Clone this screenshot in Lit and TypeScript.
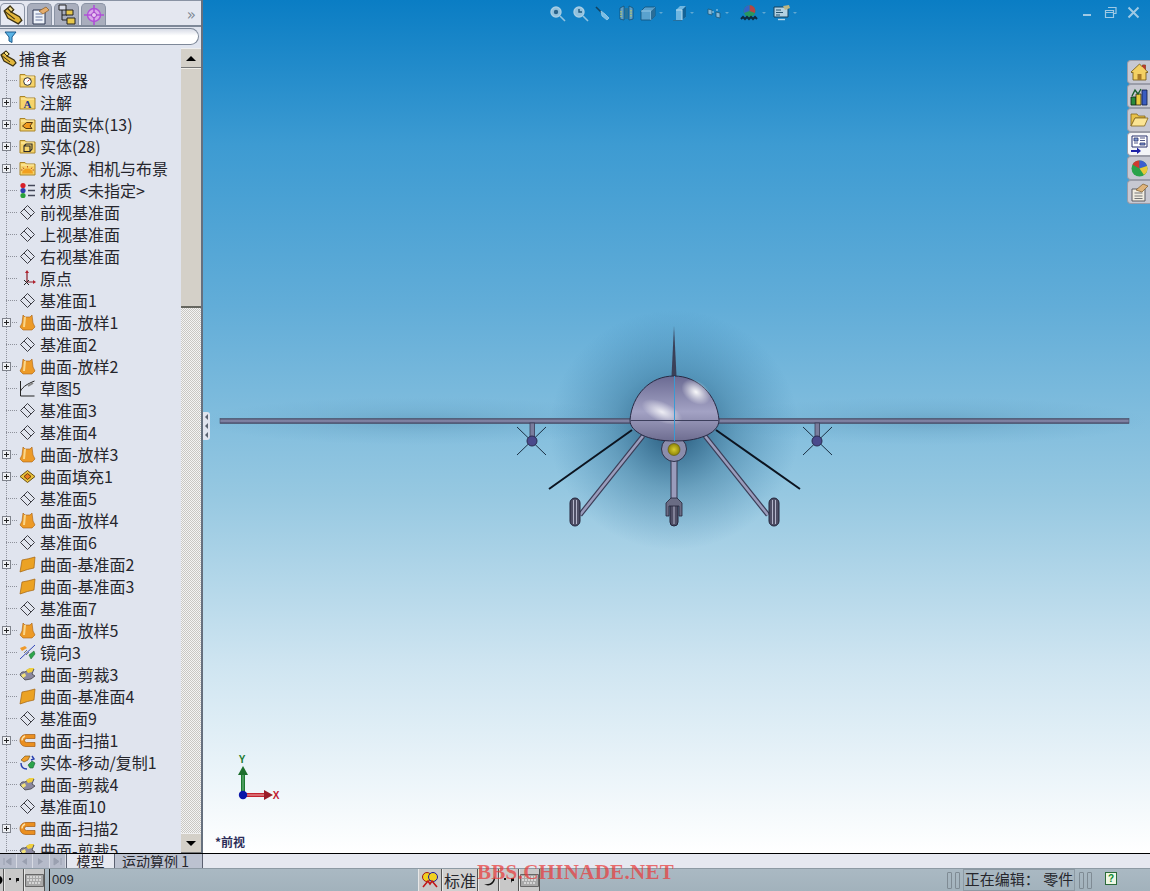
import { LitElement, html, css, svg } from 'lit';
import { customElement } from 'lit/decorators.js';

type Row = [string, string, boolean?];

const rows: Row[] = [
  ['传感器', 'fsensor'],
  ['注解', 'fnote', true],
  ['曲面实体(13)', 'fsurf', true],
  ['实体(28)', 'fsolid', true],
  ['光源、相机与布景', 'flight', true],
  ['材质  <未指定>', 'material'],
  ['前视基准面', 'plane'],
  ['上视基准面', 'plane'],
  ['右视基准面', 'plane'],
  ['原点', 'origin'],
  ['基准面1', 'plane'],
  ['曲面-放样1', 'loft', true],
  ['基准面2', 'plane'],
  ['曲面-放样2', 'loft', true],
  ['草图5', 'sketch'],
  ['基准面3', 'plane'],
  ['基准面4', 'plane'],
  ['曲面-放样3', 'loft', true],
  ['曲面填充1', 'fill', true],
  ['基准面5', 'plane'],
  ['曲面-放样4', 'loft', true],
  ['基准面6', 'plane'],
  ['曲面-基准面2', 'surfplane', true],
  ['曲面-基准面3', 'surfplane'],
  ['基准面7', 'plane'],
  ['曲面-放样5', 'loft', true],
  ['镜向3', 'mirror'],
  ['曲面-剪裁3', 'trim'],
  ['曲面-基准面4', 'surfplane'],
  ['基准面9', 'plane'],
  ['曲面-扫描1', 'sweep', true],
  ['实体-移动/复制1', 'move'],
  ['曲面-剪裁4', 'trim'],
  ['基准面10', 'plane'],
  ['曲面-扫描2', 'sweep', true],
  ['曲面-剪裁5', 'trim'],
];

const folder = (inner: unknown) => html`<svg width="17" height="16" viewBox="0 0 17 16">
  <path d="M1 2.500h5l1.500 1.500h8.500v11h-15z" fill="#f6d36a" stroke="#a9842a"/>
  <path d="M2 5h13" stroke="#fff0b0"/>
  ${inner}
</svg>`;

const part = html`<svg width="17" height="17" viewBox="0 0 17 17">
  <path d="M1 5l5-4 3 3-2 2 7 4 2 3-3 3-9-5z" fill="#e2b63c" stroke="#3c3212" stroke-width="1.2"/>
  <path d="M6 1l3 3-2 2-3-3zM1 5l9 7" fill="#f5e08a" stroke="#3c3212"/>
</svg>`;

const icons: Record<string, unknown> = {
  fsensor: folder(svg`<circle cx="8.500" cy="9.500" r="3.800" fill="#fff" stroke="#333"/><path d="M8.500 9.500l2-2" stroke="#c33"/>`),
  fnote: folder(svg`<text x="4.500" y="13.500" font-size="11" font-weight="700" font-family="Liberation Serif" fill="#24348c">A</text>`),
  fsurf: folder(svg`<path d="M3.500 10l4-3.500h6l-2.500 3.500 2 2.500H7z" fill="#f09a20" stroke="#5a3a10"/>`),
  fsolid: folder(svg`<path d="M5 8h6v5.500H5zM5 8l2-2h6v5l-2 2.500" fill="none" stroke="#2a2a2a" stroke-width="1.100"/>`),
  flight: folder(svg`<path d="M3 13.500a5.500 5 0 0 1 11 0z" fill="#f0a020"/><path d="M8.500 6v1.500M4 7.500l1 1.500M13 7.500l-1 1.500M2 10h1.500M13.500 10H15" stroke="#c05020"/>`),
  material: html`<svg width="17" height="17" viewBox="0 0 17 17">
    <circle cx="4" cy="3.500" r="2.600" fill="#d8202a"/><circle cx="4" cy="8.500" r="2.600" fill="#2f3fb0"/><circle cx="4" cy="13.500" r="2.600" fill="#2aa13a"/>
    <path d="M9 3.500h7M9 8.500h7M9 13.500h7" stroke="#44485a" stroke-width="1.600"/>
  </svg>`,
  plane: html`<svg width="17" height="17" viewBox="0 0 17 17"><path d="M1.500 8.500l7-7 7 7-7 7zM5 5l7 7" fill="none" stroke="#3c3c44"/></svg>`,
  origin: html`<svg width="17" height="17" viewBox="0 0 17 17">
    <path d="M8 2v10h7" fill="none" stroke="#8a1a24" stroke-width="1.200"/>
    <path d="M8 0l-2 3h4zM17 12l-3-2v4z" fill="#b0202c"/>
    <path d="M5 10l5 5M10 10l-5 5" stroke="#222"/>
  </svg>`,
  loft: html`<svg width="17" height="17" viewBox="0 0 17 17">
    <path d="M4 1l2 2h5l2-2 1 8 2 4-3 3H4l-3-3 2-4z" fill="#ec9a28" stroke="#a85f10" stroke-width=".6"/>
    <path d="M6 3l-1 10" stroke="#f9d68a" stroke-width="2"/>
  </svg>`,
  sketch: html`<svg width="17" height="17" viewBox="0 0 17 17">
    <path d="M1.500 1v15h14" fill="none" stroke="#222"/><path d="M1.500 11c3-5 7-7 14-10" fill="none" stroke="#222"/>
    <path d="M9 6l5-3" stroke="#888" stroke-width="2"/>
  </svg>`,
  fill: html`<svg width="17" height="17" viewBox="0 0 17 17">
    <path d="M1 8.500l7.500-6 7.500 6-7.500 6z" fill="#e9c23c" stroke="#6a4c10"/><path d="M5 8.500l3.500-3 3.500 3-3.500 3z" fill="#e77a20" stroke="#6a3c10"/>
  </svg>`,
  surfplane: html`<svg width="17" height="17" viewBox="0 0 17 17">
    <path d="M3 4q6-1 13-3l-1 11q-6 1-14 4z" fill="#eba224" stroke="#a4630f" stroke-width=".7"/>
  </svg>`,
  mirror: html`<svg width="17" height="17" viewBox="0 0 17 17">
    <path d="M1 15L16 1" stroke="#3246b8"/><path d="M1 4l5-2 2 2-5 3z" fill="#ef9a2c"/><path d="M10 11l5-4 1 3-4 5z" fill="#2ca54a" stroke="#17622a" stroke-width=".5"/>
    <path d="M5 9l3-3M7 11l3-3" stroke="#777"/>
  </svg>`,
  trim: html`<svg width="17" height="17" viewBox="0 0 17 17">
    <path d="M1 9q1-4 5-3l4-3 5 0-2 5 3 2-4 3-6 1-2-2z" fill="#8b88a0" stroke="#333" stroke-width=".7"/>
    <path d="M7 4l4-2 4 0-2 4-4 1z" fill="#f0cf3c"/><path d="M2 9l4-2 1 3-3 2z" fill="#f2e27c"/>
  </svg>`,
  sweep: html`<svg width="17" height="17" viewBox="0 0 17 17">
    <path d="M16 2.500H7C3 2.500 1 5.500 1 8.500s2 6 6 6h9v-4H7.500a2 2 0 0 1 0-4H16z" fill="#ea8f20" stroke="#a45a10" stroke-width=".7"/>
    <path d="M6 4c-2 1-3 3-3 4.500" fill="none" stroke="#fbe0a8" stroke-width="1.400"/>
  </svg>`,
  move: html`<svg width="17" height="17" viewBox="0 0 17 17">
    <path d="M2 6l4-4 5 0-2 4-4 2z" fill="#ee9e2c" stroke="#6a4a10" stroke-width=".6"/>
    <path d="M9 11l4-4 3 2-2 5-3 0z" fill="#2ba34a" stroke="#176030" stroke-width=".6"/>
    <path d="M2 9c0 4 2 6 6 6M13 2l2 3-3 1" fill="none" stroke="#2840b0" stroke-width="1.400"/>
  </svg>`,
};

const tabIcons = [
  html`<svg width="22" height="20" viewBox="0 0 17 17">
    <path d="M1 5l5-4 3 3-2 2 7 4 2 3-3 3-9-5z" fill="#e2b63c" stroke="#3c3212" stroke-width="1.100"/><path d="M6 1l3 3-2 2-3-3zM1 5l9 7" fill="#f5e08a" stroke="#3c3212"/>
  </svg>`,
  html`<svg width="20" height="20" viewBox="0 0 20 20">
    <path d="M3 5h12v14H3z" fill="#eef3fa" stroke="#2b3550"/><path d="M5.500 9h7M5.500 12h7M5.500 15h7" stroke="#6a78a0"/>
    <path d="M9 6l7-4 3 3-6 4z" fill="#e6ad6c" stroke="#8a5a20" stroke-width=".7"/>
  </svg>`,
  html`<svg width="20" height="22" viewBox="0 0 20 22">
    <path d="M5 6v10h5M5 11h5" fill="none" stroke="#222"/>
    <path d="M2 1h7v5H2z" fill="#d8dcea" stroke="#222"/><path d="M9 6h7v5H9z" fill="#e8c84c" stroke="#222"/><path d="M10 14h8v6h-8z" fill="#e8c84c" stroke="#222"/>
  </svg>`,
  html`<svg width="22" height="22" viewBox="0 0 22 22">
    <circle cx="11" cy="11" r="6.500" fill="#d9a6ea" stroke="#b050d8" stroke-width="1.400"/>
    <path d="M11 1v20M1 11h20" stroke="#b050d8" stroke-width="1.600"/><circle cx="11" cy="11" r="2.500" fill="#e9c6f2" stroke="#a040c8"/>
  </svg>`,
];

const topIcons = [
  html`<svg width="17" height="17" viewBox="0 0 17 17"><circle cx="7" cy="7" r="5" fill="#a9cde2" stroke="#c4dcea" stroke-width="1.400"/><circle cx="7" cy="7" r="2.200" fill="#2f5f80"/><path d="M11 11l5 5" stroke="#a8d0e6" stroke-width="1.600"/></svg>`,
  html`<svg width="17" height="17" viewBox="0 0 17 17"><circle cx="7" cy="7" r="5" fill="#a9cde2" stroke="#c4dcea" stroke-width="1.400"/><path d="M7 4v3h3" stroke="#23506f" stroke-width="1.400" fill="none"/><path d="M11 11l5 5" stroke="#a8d0e6" stroke-width="1.600"/></svg>`,
  html`<svg width="17" height="17" viewBox="0 0 17 17"><path d="M1 2l6 6" stroke="#12384f" stroke-width="1.600"/><path d="M6 6l4 3 4 4-2 2-5-4z" fill="#8dc8ea" stroke="#b9dcee" stroke-width=".8"/></svg>`,
  html`<svg width="15" height="17" viewBox="0 0 15 17"><path d="M1 3l4-2v14l-4-1zM10 1l4 2v11l-4 1z" fill="#6fa5c6" stroke="#16405c" stroke-width=".7"/><path d="M6 3h3v11H6z" fill="#2d7090"/><path d="M2 6v6M12 5v7" stroke="#d8d860" stroke-width="1.300" stroke-dasharray="1.500 1"/></svg>`,
  html`<svg width="17" height="17" viewBox="0 0 17 17"><path d="M1 6l4-4h10v9l-4 4H1z" fill="#68a8d0" stroke="#114a6c" stroke-width=".8"/><path d="M1 6h10v9M11 6l4-4" fill="none" stroke="#bfe0f2" stroke-width=".8"/><path d="M11 6l4-4v9l-4 4z" fill="#2e6a90"/></svg>`,
  html`<svg width="15" height="17" viewBox="0 0 15 17"><path d="M3 5l4-4h6v11l-4 3H3z" fill="#7fc0e6"/><path d="M9 5l4-4v11l-4 3z" fill="#125e90"/><path d="M3 5h6v10" fill="none" stroke="#d9eef8"/><path d="M0 15.500h9" stroke="#2a6d98"/></svg>`,
  html`<svg width="17" height="15" viewBox="0 0 17 15"><path d="M2 3l4 1v5l-4-1zM10 6l4 1v5l-4-1z" fill="#9bc3da" stroke="#20506c" stroke-width=".8"/><path d="M7 5v2M10 4h2" stroke="#cde4f0"/></svg>`,
  html`<svg width="21" height="18" viewBox="0 0 21 18"><circle cx="10.500" cy="7" r="6" fill="#2c9c50"/><path d="M10.500 7V1a6 6 0 0 1 5.500 8z" fill="#d03a30"/><path d="M10.500 7V1a6 6 0 0 0-5.500 8z" fill="#3a60c8"/><path d="M2 15l2-2 2 2 2-2 2 2 2-2 2 2 2-2 2 2" stroke="#0c1c28" stroke-width="2" fill="none"/></svg>`,
  html`<svg width="19" height="18" viewBox="0 0 19 18"><path d="M2 3h14v10H2z" fill="#cfe0e8" stroke="#14364c"/><path d="M4 6h5M4 8.500h7M4 11h4" stroke="#2a4c60"/><path d="M11 2l6-1 1 3-5 2z" fill="#d8c078"/><path d="M6 15.500h7" stroke="#d5e6ee" stroke-width="1.400"/></svg>`,
];

const paneIcons = [
  html`<svg width="19" height="18" viewBox="0 0 19 18"><path d="M1 9l8.500-8 3 3V2h3v5l2.500 2-1 1-1-.8V17H3V9.200L2 10z" fill="#f4d062" stroke="#6e5412" stroke-width=".8"/><path d="M12.500 2h3v5l-3-3z" fill="#b83830"/><path d="M7.500 11h4v6h-4z" fill="#a87a28"/></svg>`,
  html`<svg width="19" height="19" viewBox="0 0 19 19"><path d="M1 10h5v8H1z" fill="#2a8a3c" stroke="#0f2412" stroke-width=".8"/><path d="M6 7h5v11H6z" fill="#e9cc40" stroke="#2a2412" stroke-width=".8"/><path d="M12 3h5v15h-5z" fill="#3a5cc0" stroke="#101c44" stroke-width=".8"/><path d="M2 9l3-6 3 4 3-5" fill="none" stroke="#1a5c2c" stroke-width="1.400"/></svg>`,
  html`<svg width="19" height="16" viewBox="0 0 19 16"><path d="M1 2h6l1.500 2H15v2H5L1 14z" fill="#e9c24a" stroke="#84641a" stroke-width=".8"/><path d="M5 6h13l-3.500 8H1z" fill="#fbe494" stroke="#84641a" stroke-width=".8"/></svg>`,
  html`<svg width="19" height="19" viewBox="0 0 19 19"><path d="M2 1h15v11H2z" fill="#fff" stroke="#28306c"/><path d="M4 3h4v3H4zM10 3h5M10 5.500h5M4 8h4M10 8h5v2h-5z" fill="#7f9ad0" stroke="#28306c" stroke-width=".8"/><path d="M1 16h7" stroke="#1c22a8" stroke-width="2"/><path d="M7 12.500l4 3.500-4 3z" fill="#1c22a8"/></svg>`,
  html`<svg width="19" height="19" viewBox="0 0 19 19"><circle cx="9.500" cy="9.500" r="8" fill="#2aa34a"/><path d="M9.500 9.500l-7-4a8 8 0 0 1 7-4z" fill="#d03a30"/><path d="M9.500 9.500v-8a8 8 0 0 1 7.500 5.500z" fill="#3a5ed0"/><path d="M9.500 9.500L17 7a8 8 0 0 1-3 9z" fill="#e8c83c"/></svg>`,
  html`<svg width="19" height="19" viewBox="0 0 19 19"><path d="M2 6h13v12H2z" fill="#f0ece0" stroke="#5a5a60"/><path d="M4.500 10h8M4.500 13h8M4.500 15.500h8" stroke="#777"/><path d="M6 7l7-6 5 2-6 6z" fill="#dfb47c" stroke="#7a5a2a" stroke-width=".7"/></svg>`,
];

const navIcons = [
  html`<svg width="9" height="9" viewBox="0 0 9 9"><path d="M1 1v7M8 1L3 4.500 8 8z" fill="#9aa0b0" stroke="#9aa0b0"/></svg>`,
  html`<svg width="9" height="9" viewBox="0 0 9 9"><path d="M7 1L2 4.500 7 8z" fill="#9aa0b0"/></svg>`,
  html`<svg width="9" height="9" viewBox="0 0 9 9"><path d="M2 1l5 3.500L2 8z" fill="#9aa0b0"/></svg>`,
  html`<svg width="9" height="9" viewBox="0 0 9 9"><path d="M8 1v7M1 1l5 3.500L1 8z" fill="#9aa0b0" stroke="#9aa0b0"/></svg>`,
];

@customElement('app-root')
export class AppRoot extends LitElement {
  static styles = css`
    :host {
      display: grid;
      grid-template-rows: 853px 15px 23px;
      width: 1150px;
      height: 891px;
      position: relative;
      overflow: hidden;
      font-family: "Noto Sans CJK SC", sans-serif;
      color: #26262c;
      background: #e6e8f0;
    }

    .main {
      display: flex;
      min-height: 0;
    }

    .panel {
      width: 201px;
      flex: none;
      display: flex;
      flex-direction: column;
      background: #e0e4ee;
      border-right: 2px solid #66707e;
    }

    .tabs {
      height: 24px;
      flex: none;
      display: flex;
      align-items: flex-end;
      gap: 2px;
      border-top: 1px solid #8a93a4;
      border-bottom: 2px solid #7e8898;
      background: #e4e7f0;
    }

    .tab {
      width: 25px;
      height: 22px;
      display: flex;
      align-items: center;
      justify-content: center;
      border-radius: 5px 5px 0 0;
      background: #a9aebd;
      border: 1px solid #8a93a4;
      border-bottom: 0;
      box-sizing: border-box;
    }

    .tab.on {
      background: #e6e9f2;
    }

    .tab svg {
      flex: none;
    }

    .more {
      margin-left: auto;
      margin-right: 5px;
      font: 15px/20px "DejaVu Sans", sans-serif;
      color: #7d8794;
    }

    .filter {
      height: 15px;
      flex: none;
      margin: 1px 2px 3px 0;
      border: 1px solid #7e8898;
      border-left: 0;
      border-radius: 0 9px 9px 0;
      background: linear-gradient(#d7dbe6, #fff 45%);
      display: flex;
      align-items: center;
      padding-left: 4px;
    }

    .body {
      flex: 1;
      min-height: 0;
      display: flex;
    }

    .tree {
      flex: 1;
      min-width: 0;
      overflow: hidden;
    }

    .rows {
      margin-top: -1px;
    }

    .row {
      height: 22px;
      display: flex;
      align-items: center;
      font-size: 16px;
      line-height: 22px;
    }

    .label {
      white-space: pre;
    }

    .guide {
      width: 18px;
      height: 22px;
      flex: none;
      display: flex;
      align-items: center;
      background:
        repeating-linear-gradient(#8f929c 0 1px, transparent 1px 2px) 6px 0 / 1px 100% no-repeat,
        repeating-linear-gradient(90deg, #8f929c 0 1px, transparent 1px 2px) 6px 11px / 12px 1px no-repeat;
    }

    .box {
      width: 9px;
      height: 9px;
      box-sizing: border-box;
      margin-left: 2px;
      border: 1px solid #7f838c;
      background:
        linear-gradient(#222, #222) center / 5px 1px no-repeat,
        linear-gradient(#222, #222) center / 1px 5px no-repeat,
        #eef0f4;
    }

    .icon {
      width: 22px;
      flex: none;
      display: flex;
      align-items: center;
      padding-left: 1px;
      box-sizing: border-box;
    }

    .root .icon {
      width: 19px;
      padding-left: 0;
    }

    .scroll {
      width: 20px;
      flex: none;
      display: flex;
      flex-direction: column;
      background: repeating-conic-gradient(#c9c7c2 0 25%, #f4f4f4 0 50%) 0 0 / 2px 2px;
    }

    .sbtn {
      height: 20px;
      flex: none;
      background: #d4d0c8;
      display: flex;
      align-items: center;
      justify-content: center;
      box-sizing: border-box;
      border-bottom: 1px solid #777;
      border-top: 1px solid #eee;
    }

    .thumb {
      height: 240px;
      flex: none;
      background: #d4d0c8;
      border-top: 1px solid #f0eee8;
      border-bottom: 2px solid #66665f;
      box-sizing: border-box;
    }

    .gap {
      flex: 1;
    }

    .up {
      border-left: 5px solid transparent;
      border-right: 5px solid transparent;
      border-bottom: 5px solid #000;
    }

    .down {
      border-left: 5px solid transparent;
      border-right: 5px solid transparent;
      border-top: 5px solid #000;
    }

    .view {
      flex: 1;
      position: relative;
      overflow: hidden;
      background: linear-gradient(#0a7dc4 0, #3d9bd2 17%, #62add8 36%, #96c8e1 58%, #cfe5f1 78%, #fff 100%);
    }

    .scene {
      position: absolute;
      inset: 0;
      width: 100%;
      height: 100%;
    }

    .toolbar {
      position: absolute;
      top: 4px;
      left: 343px;
      display: flex;
      align-items: center;
      height: 18px;
      opacity: 0.85;
    }

    .tool {
      width: 23px;
      display: flex;
      justify-content: center;
    }

    .tool.drop {
      width: 33px;
      justify-content: flex-start;
      align-items: center;
      gap: 2px;
      padding-left: 2px;
      box-sizing: border-box;
    }

    .drop i {
      border-left: 2px solid transparent;
      border-right: 2px solid transparent;
      border-top: 2px solid #6fb0d5;
    }

    .winbtns {
      position: absolute;
      top: 6px;
      right: 10px;
      display: flex;
      gap: 10px;
      opacity: 0.8;
    }

    .pane {
      position: absolute;
      top: 60px;
      right: 0;
      display: flex;
      flex-direction: column;
    }

    .pbtn {
      width: 23px;
      height: 24px;
      box-sizing: border-box;
      display: flex;
      align-items: center;
      justify-content: center;
      background: #c7c8d2;
      border: 1px solid #9a9ca8;
      border-right: 0;
      border-radius: 4px 0 0 4px;
    }

    .pbtn.on {
      background: #f4f5f8;
    }

    .flyout {
      position: absolute;
      left: 0;
      top: 412px;
      width: 7px;
      height: 28px;
      background: #e0e4ee;
      display: flex;
      flex-direction: column;
      justify-content: space-around;
      align-items: center;
      border-radius: 0 3px 3px 0;
    }

    .flyout i {
      border-top: 3px solid transparent;
      border-bottom: 3px solid transparent;
      border-right: 3px solid #5a6270;
    }

    .viewname {
      position: absolute;
      left: 12px;
      top: 833px;
      font-size: 12px;
      line-height: 18px;
      font-weight: 700;
      color: #2c2c58;
    }

    .bar {
      border-top: 1px solid #000;
      display: flex;
      align-items: stretch;
      background: #e6e8f0;
      box-sizing: border-box;
    }

    .nav {
      width: 66px;
      display: flex;
      background: #b6bbca;
    }

    .nav span {
      flex: 1;
      border-right: 1px solid #d8dbe4;
      display: flex;
      align-items: center;
      justify-content: center;
    }

    .mtab {
      font-size: 14px;
      line-height: 14px;
      border-right: 1px solid #5b6070;
      box-sizing: border-box;
    }

    .mtab.on {
      width: 49px;
      text-align: center;
      background: #e6e8f0;
      border-left: 1px solid #5b6070;
    }

    .mtab.off {
      width: 88px;
      padding-left: 7px;
      background: #bcc2d0;
    }

    .status {
      display: flex;
      align-items: stretch;
      background: linear-gradient(#aab9c3, #a2b2bc);
      border-top: 1px solid #8d9aa4;
      box-sizing: border-box;
      font-size: 15px;
      line-height: 21px;
    }

    .kbd {
      width: 50px;
      flex: none;
      display: flex;
      border-right: 1px solid #222;
      box-sizing: border-box;
      overflow: hidden;
    }

    .kbd > span, .ime > span {
      display: flex;
      align-items: center;
      justify-content: center;
      background: #c8c8c8;
      border-left: 1px solid #e8e8e8;
      border-right: 1px solid #555;
      box-sizing: border-box;
      flex: none;
    }

    .kbd > .cut {
      width: 7px;
      margin-left: -3px;
    }

    .kbd > .w20, .ime > .w20 {
      width: 20px;
    }

    .kbd > .w21, .ime > .w21 {
      width: 21px;
    }

    .ime > .w24 {
      width: 24px;
    }

    .code {
      width: 368px;
      flex: none;
      padding-left: 2px;
      box-sizing: border-box;
      font: 13px/21px "Liberation Sans", sans-serif;
    }

    .ime {
      width: 122px;
      flex: none;
      display: flex;
    }

    .ime > .name {
      width: 36px;
      font-size: 16px;
      background: #d0d0d0;
    }

    .spacer {
      flex: 1;
    }

    .grips {
      display: flex;
      gap: 3px;
      align-items: center;
      width: 16px;
      flex: none;
    }

    .grips.after {
      margin-left: 4px;
    }

    .grips i {
      width: 5px;
      height: 17px;
      border: 1px solid #7f8b94;
      border-radius: 1px;
      box-sizing: border-box;
    }

    .edit {
      width: 112px;
      flex: none;
      text-align: center;
      white-space: pre;
      line-height: 17px;
      border: 1px solid #8d9aa4;
      box-sizing: border-box;
    }

    .help {
      width: 12px;
      height: 13px;
      margin: 3px 33px 0 10px;
      flex: none;
      background: #eef6e4;
      border: 1px solid #2b6b3a;
      box-sizing: border-box;
      color: #0a8a30;
      font: 700 10px/11px "Liberation Sans", sans-serif;
      text-align: center;
    }

    .mark {
      position: absolute;
      left: 477px;
      top: 859px;
      font: 700 21px/26px "Liberation Serif", serif;
      letter-spacing: 0.3px;
      color: rgba(232, 60, 60, 0.72);
      white-space: nowrap;
    }
  `;

  private scene() {
    return html`<svg class="scene" viewBox="203 0 947 853">
      <defs>
        <radialGradient id="halo">
          <stop offset="0" stop-color="#0d3d60" stop-opacity=".8"/>
          <stop offset=".5" stop-color="#1c5a80" stop-opacity=".35"/>
          <stop offset="1" stop-color="#2a70a0" stop-opacity="0"/>
        </radialGradient>
        <linearGradient id="hull" x1="0" y1="0" x2="0" y2="1">
          <stop offset="0" stop-color="#6a6a92"/>
          <stop offset=".55" stop-color="#a3a2c4"/>
          <stop offset="1" stop-color="#6e6d90"/>
        </linearGradient>
        <radialGradient id="glint1"><stop offset="0" stop-color="#fff" stop-opacity=".95"/><stop offset="1" stop-color="#fff" stop-opacity="0"/></radialGradient>
        <linearGradient id="wing" x1="0" y1="0" x2="0" y2="1">
          <stop offset="0" stop-color="#4a4c68"/><stop offset=".5" stop-color="#8c8fb0"/><stop offset="1" stop-color="#3e4060"/>
        </linearGradient>
        <radialGradient id="ball"><stop offset="0" stop-color="#d8cc30"/><stop offset="1" stop-color="#8e8408"/></radialGradient>
      </defs>
      <ellipse cx="674" cy="430" rx="125" ry="120" fill="url(#halo)"/>
      <ellipse cx="420" cy="421" rx="220" ry="24" fill="url(#halo)" opacity=".22"/>
      <ellipse cx="930" cy="421" rx="220" ry="24" fill="url(#halo)" opacity=".22"/>

      <rect x="220" y="418.500" width="909" height="5" fill="url(#wing)" stroke="#4b5068" stroke-width=".6"/>
      <path d="M674 326l-2.500 50h5z" fill="#3a4058"/>

      <g stroke="#1b3044" stroke-width="1" fill="none">
        <path d="M517 427l29 28M546 427l-29 28M803 427l29 28M832 427l-29 28"/>
      </g>
      <g fill="#7a7c9c" stroke="#3a3c58" stroke-width=".8">
        <rect x="530" y="423" width="4.500" height="16"/>
        <rect x="815" y="423" width="4.500" height="16"/>
      </g>
      <circle cx="532" cy="441" r="5" fill="#4a4a8c" stroke="#2a2a50"/>
      <circle cx="817" cy="441" r="5" fill="#4a4a8c" stroke="#2a2a50"/>

      <path d="M632 430L549 489M716 430L800 489" stroke="#0c1420" stroke-width="2"/>
      <path d="M643 436L580 515M705 436L768 515" stroke="#3c3e58" stroke-width="5"/>
      <path d="M643 436L580 515M705 436L768 515" stroke="#9a9cbc" stroke-width="2.600"/>

      <g fill="#4f4f66" stroke="#23243a">
        <rect x="570" y="498" width="10" height="28" rx="5"/>
        <rect x="769" y="498" width="10" height="28" rx="5"/>
        <rect x="670" y="502" width="8" height="24" rx="4"/>
      </g>
      <path d="M573.500 500v24M576.500 500v24M772.500 500v24M775.500 500v24M674 504v20" stroke="#b4b5ca"/>
      <rect x="671" y="460" width="6" height="40" fill="#9a9cbc" stroke="#34364e"/>
      <path d="M666 516v-13l5-5h6l5 5v13h-3v-10h-10v10z" fill="#6a6c84" stroke="#23243a" stroke-width=".8"/>

      <circle cx="674" cy="449" r="12.500" fill="#8b8dac" stroke="#2c3048"/>
      <circle cx="674" cy="449.500" r="6" fill="url(#ball)" stroke="#5a5608" stroke-width=".6"/>

      <path d="M630 420C632 395 650 376 674 376C698 376 717 395 719 420C719 428 712 433 705 436C695 440 685 441 674 441C662 441 650 439 642 435C635 431 630 427 630 420Z" fill="url(#hull)" stroke="#282a44" stroke-width="1"/>
      <ellipse cx="696" cy="392" rx="16" ry="11" fill="url(#glint1)" transform="rotate(35 696 392)"/>
      <ellipse cx="662" cy="412" rx="22" ry="10" fill="url(#glint1)" transform="rotate(25 662 412)" opacity=".85"/>
      <path d="M630.500 420.500h88" stroke="#3c3e5c" stroke-width="1"/>
      <path d="M674.500 376v65" stroke="#3a9ad2" stroke-width="1"/>

      <path d="M243 795V773" stroke="#1c7a30" stroke-width="4"/>
      <path d="M243 795V773" stroke="#6ab27a" stroke-width="1.200"/>
      <path d="M243 766l-5 9h10z" fill="#1c6e2c"/>
      <path d="M243 795h24" stroke="#c22430" stroke-width="4"/>
      <path d="M243 795h24" stroke="#e89a9a" stroke-width="1.200"/>
      <path d="M273 795l-9-5v10z" fill="#9a1c28"/>
      <circle cx="243" cy="795" r="4.200" fill="#0a16a8"/>
      <text x="242" y="763" text-anchor="middle" font-size="10" font-weight="700" font-family="Liberation Sans" fill="#1c7a30">Y</text>
      <text x="276" y="799" text-anchor="middle" font-size="10" font-weight="700" font-family="Liberation Sans" fill="#c22030">X</text>
    </svg>`;
  }

  render() {
    return html`
      <div class="main">
        <div class="panel">
          <div class="tabs">
            ${tabIcons.map((ic, i) => html`<div class="tab ${i === 0 ? 'on' : ''}">${ic}</div>`)}
            <span class="more">»</span>
          </div>
          <div class="filter">
            <svg width="13" height="12" viewBox="0 0 13 12"><path d="M1 1h11L8 6v5.500L5 10V6z" fill="#5ab4e6" stroke="#1c5a8c"/></svg>
          </div>
          <div class="body">
            <div class="tree">
              <div class="rows">
                <div class="row root"><span class="icon">${part}</span><span class="label">捕食者</span></div>
                ${rows.map(([label, kind, expand]) => html`
                  <div class="row">
                    <span class="guide">${expand ? html`<span class="box"></span>` : ''}</span>
                    <span class="icon">${icons[kind]}</span>
                    <span class="label">${label}</span>
                  </div>`)}
              </div>
            </div>
            <div class="scroll">
              <div class="sbtn"><i class="up"></i></div>
              <div class="thumb"></div>
              <div class="gap"></div>
              <div class="sbtn"><i class="down"></i></div>
            </div>
          </div>
        </div>
        <div class="view">
          ${this.scene()}
          <div class="toolbar">
            ${topIcons.map((ic, i) => i > 3
              ? html`<span class="tool drop">${ic}<i></i></span>`
              : html`<span class="tool">${ic}</span>`)}
          </div>
          <div class="winbtns">
            <svg width="13" height="13" viewBox="0 0 13 13"><path d="M2 9h8" stroke="#c4dcec" stroke-width="2"/></svg>
            <svg width="13" height="13" viewBox="0 0 13 13"><path d="M4 1.500h8v6H10M1.500 4.500h8v7h-8zM1.500 6.500h8" fill="none" stroke="#c4dcec" stroke-width="1.200"/></svg>
            <svg width="13" height="13" viewBox="0 0 13 13"><path d="M1.500 1.500l10 10M11.500 1.500l-10 10" stroke="#c4dcec" stroke-width="2"/></svg>
          </div>
          <div class="pane">
            ${paneIcons.map((ic, i) => html`<div class="pbtn ${i === 3 ? 'on' : ''}">${ic}</div>`)}
          </div>
          <div class="flyout"><i></i><i></i><i></i></div>
          <div class="viewname">*前视</div>
        </div>
      </div>
      <div class="bar">
        <div class="nav">${navIcons.map((ic) => html`<span>${ic}</span>`)}</div>
        <div class="mtab on">模型</div>
        <div class="mtab off">运动算例 1</div>
      </div>
      <div class="status">
        <div class="kbd">
          <span class="cut"><svg width="5" height="10" viewBox="0 0 5 10"><circle cx="0" cy="5" r="4.500"/></svg></span>
          <span class="w20">${this.dots()}</span>
          <span class="w21">${this.keys()}</span>
        </div>
        <div class="code">009</div>
        <div class="ime">
          <span class="w24"><svg width="18" height="18" viewBox="0 0 18 18"><circle cx="6" cy="6" r="4.500" fill="#f0d020" stroke="#a01818"/><circle cx="12" cy="6" r="4.500" fill="#f0d020" stroke="#1818a0"/><path d="M2 16l5-6 2 3 2-3 5 6" fill="none" stroke="#c01818" stroke-width="1.600"/></svg></span>
          <span class="name">标准</span>
          <span class="w21"><svg width="14" height="14" viewBox="0 0 14 14"><path d="M12 3c0 6-4 9-10 8 4 3 10 1 11-5z" fill="#111"/></svg></span>
          <span class="w20">${this.dots()}</span>
          <span class="w21">${this.keys()}</span>
        </div>
        <div class="spacer"></div>
        <div class="grips"><i></i><i></i></div>
        <div class="edit">正在编辑： 零件</div>
        <div class="grips after"><i></i><i></i></div>
        <div class="help">?</div>
      </div>
      <div class="mark">BBS.CHINADE.NET</div>
    `;
  }

  private dots() {
    return html`<svg width="12" height="8" viewBox="0 0 12 8"><path d="M1 2h2v2H1zM8 2h3v3H9l-1 2" fill="#111"/></svg>`;
  }

  private keys() {
    return html`<svg width="19" height="13" viewBox="0 0 19 13"><path d="M0.500 0.500h18v12h-18z" fill="#a8a8a8" stroke="#666"/><path d="M2 3h15M2 6h15M4 9h11" stroke="#e4e4e4" stroke-width="1.400" stroke-dasharray="2 1"/></svg>`;
  }
}
